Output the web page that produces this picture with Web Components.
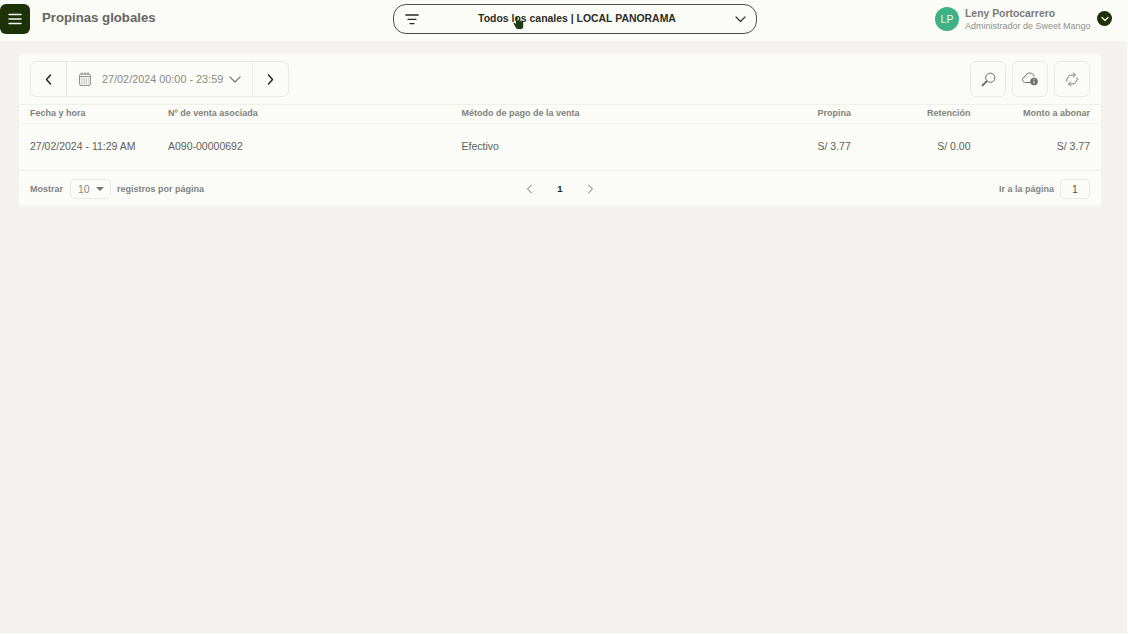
<!DOCTYPE html>
<html lang="es">
<head>
<meta charset="utf-8">
<title>Propinas globales</title>
<style>
  html, body { margin: 0; height: 100%; background: #fbfcf7; }
  body { font-family: "Liberation Sans", Arial, sans-serif; overflow: hidden; }
</style>
</head>
<body>
<app-shell>
  <top-bar slot="top"></top-bar>
  <tips-card></tips-card>
</app-shell>

<script>
class AppShell extends HTMLElement {
  constructor() {
    super();
    this.attachShadow({ mode: "open" });
    this.shadowRoot.innerHTML = `
      <style>
        :host { display: flex; flex-direction: column; width: 1127px; height: 633px; background: #f3f2ee; }
        main { flex: 1; padding: 13px 26px 0 19px; }
      </style>
      <slot name="top"></slot>
      <main><slot></slot></main>
    `;
  }
}

class TopBar extends HTMLElement {
  constructor() {
    super();
    this.attachShadow({ mode: "open" });
    this.shadowRoot.innerHTML = `
      <style>
        :host { display: grid; grid-template-columns: 393px 364px 1fr; height: 41px; background: #fbfcf7; box-sizing: border-box; }
        .left { display: flex; align-items: center; gap: 12px; }
        .menu { width: 30px; height: 30px; border-radius: 6px; background: #1d3208; display: flex; align-items: center; justify-content: center; margin-top: -4px; }
        h1 { margin: -5px 0 0; font-size: 13.2px; line-height: 16px; font-weight: 700; color: #666663; }
        .channel { position: relative; box-sizing: border-box; height: 30px; margin-top: 4px; border: 1px solid #4d4f49; border-radius: 13px; display: flex; align-items: center; padding: 0 10px 0 11px; background: #fbfcf7; }
        .channel span { flex: 1; text-align: center; font-size: 10.45px; font-weight: 700; color: #2a2d25; padding-bottom: 2px; }
        .cursor { position: absolute; left: 119px; top: 11px; }
        .user { display: flex; align-items: flex-start; padding-left: 178px; }
        .avatar { width: 24px; height: 24px; margin-top: 7px; border-radius: 50%; background: #3eb285; color: #eefaf3; font-size: 10.5px; display: flex; align-items: center; justify-content: center; }
        .who { margin-left: 6px; padding-top: 8px; width: 126px; }
        .name { font-size: 10.4px; line-height: 12px; font-weight: 700; color: #7b7b77; }
        .role { font-size: 9px; line-height: 12px; color: #90908c; white-space: nowrap; }
        .drop { width: 15px; height: 15px; margin: 11px 0 0 6px; border-radius: 50%; background: #1d3208; display: flex; align-items: center; justify-content: center; }
      </style>
      <div class="left">
        <div class="menu">
          <svg width="14" height="12" viewBox="0 0 14 12" fill="none" stroke="#f4f5ee" stroke-width="1.5" stroke-linecap="round"><path d="M1 1.500h12M1 6h12M1 10.500h12"/></svg>
        </div>
        <h1>Propinas globales</h1>
      </div>
      <div class="channel">
        <svg width="14" height="11" viewBox="0 0 14 11" fill="none" stroke="#26281f" stroke-width="1.3" stroke-linecap="round"><path d="M.8 1h12.400M3 5.300h8M5 9.600h4"/></svg>
        <span>Todos los canales | LOCAL PANORAMA</span>
        <svg width="11" height="7" viewBox="0 0 11 7" fill="none" stroke="#33362e" stroke-width="1.2" stroke-linecap="round" stroke-linejoin="round"><path d="M1 1l4.500 4.500L10 1"/></svg>
        <svg class="cursor" width="11" height="15" viewBox="0 0 11 15" fill="#1f3a16"><path d="M3 1.200c0-1 1.600-1 1.600 0v4.300l.6-.2V4.400c0-.8 1.300-.8 1.400 0v1l.6-.1c.2-.7 1.300-.6 1.400.2l.6.1c.8 0 1 .6 1 1.400v3.500c0 1.300-.8 2.500-2 2.500H5c-1 0-1.600-.6-2.200-1.600L.6 7.800c-.4-.8.5-1.500 1.200-.9L3 8z"/></svg>
      </div>
      <div class="user">
        <div class="avatar">LP</div>
        <div class="who">
          <div class="name">Leny Portocarrero</div>
          <div class="role">Administrador de Sweet Mango</div>
        </div>
        <div class="drop">
          <svg width="8" height="6" viewBox="0 0 8 6" fill="none" stroke="#eef2e4" stroke-width="1.4" stroke-linecap="round" stroke-linejoin="round"><path d="M1 1.500l3 3 3-3"/></svg>
        </div>
      </div>
    `;
  }
}

class IconButton extends HTMLElement {
  constructor() {
    super();
    this.attachShadow({ mode: "open" });
    this.shadowRoot.innerHTML = `
      <style>
        :host { display: flex; width: 36px; height: 36px; box-sizing: border-box; border: 1px solid #ebebe6; border-radius: 6px; align-items: center; justify-content: center; }
      </style>
      <slot></slot>
    `;
  }
}

class DateNav extends HTMLElement {
  constructor() {
    super();
    this.attachShadow({ mode: "open" });
    this.shadowRoot.innerHTML = `
      <style>
        :host { display: flex; height: 36px; box-sizing: border-box; border: 1px solid #ebebe6; border-radius: 6px; align-items: stretch; }
        .arrow { width: 35px; display: flex; align-items: center; justify-content: center; }
        .range { width: 187px; box-sizing: border-box; border-left: 1px solid #ebebe6; border-right: 1px solid #ebebe6; display: flex; align-items: center; padding-left: 12px; color: #8a8a84; font-size: 10.85px; }
        .range span { margin: 0 6px 0 11px; white-space: nowrap; }
      </style>
      <div class="arrow"><svg width="7" height="11" viewBox="0 0 7 11" fill="none" stroke="#23261f" stroke-width="1.5" stroke-linecap="round" stroke-linejoin="round"><path d="M5.500 1L1.500 5.500l4 4.500"/></svg></div>
      <div class="range">
        <svg width="12" height="14" viewBox="0 0 12 14" fill="none" stroke="#7d7d78" stroke-width=".9"><rect x=".6" y="2" width="10.800" height="11.400" rx="1.400"/><path d="M3 .4v2.400M6 .4v2.400M9 .4v2.400M.6 4.600h10.800"/><path stroke-dasharray="1 1.100" d="M2.600 7h7M2.600 9h7M2.600 11h7"/></svg>
        <span>27/02/2024 00:00 - 23:59</span>
        <svg width="12" height="7" viewBox="0 0 12 7" fill="none" stroke="#6f6f6a" stroke-width="1.1" stroke-linecap="round" stroke-linejoin="round"><path d="M.8.8L6 6l5.200-5.200"/></svg>
      </div>
      <div class="arrow"><svg width="7" height="11" viewBox="0 0 7 11" fill="none" stroke="#23261f" stroke-width="1.5" stroke-linecap="round" stroke-linejoin="round"><path d="M1.500 1l4 4.500-4 4.500"/></svg></div>
    `;
  }
}

class TipsCard extends HTMLElement {
  constructor() {
    super();
    this.attachShadow({ mode: "open" });
    this.shadowRoot.innerHTML = `
      <style>
        :host { display: block; width: 1082px; height: 152px; background: #fbfcf7; border-radius: 4px; color: #5d5d59; }
        .tools { display: flex; justify-content: space-between; align-items: center; height: 51px; box-sizing: border-box; padding: 0 11px; border-bottom: 1px solid #f0f0eb; }
        .actions { display: flex; gap: 6px; }
        .grid { display: grid; grid-template-columns: 138px 293.500px 356px 34px 119px 1fr; padding: 0 11px; align-items: center; white-space: nowrap; box-sizing: border-box; }
        .head { height: 19px; border-bottom: 1px solid #f3f3ee; font-size: 9px; font-weight: 700; color: #82827e; padding-bottom: 2px; }
        .row { height: 47px; border-bottom: 1px solid #f0f0eb; font-size: 10.5px; color: #60605c; padding-bottom: 2px; }
        .r { text-align: right; }
        .foot { display: grid; grid-template-columns: 1fr 1fr 1fr; align-items: center; height: 35px; padding: 0 11px; font-size: 9px; font-weight: 700; color: #82827e; }
        .show { display: flex; align-items: center; gap: 6px; }
        .select { width: 41px; height: 20px; margin-left: 1px; box-sizing: border-box; border: 1px solid #ebebe6; border-radius: 4px; display: flex; align-items: center; padding-left: 7px; gap: 6px; font-size: 10.5px; font-weight: 400; color: #8a8a85; }
        .caret { width: 0; height: 0; border: 4px solid transparent; border-top: 4px solid #77776f; border-bottom: 0; }
        .pager { display: flex; justify-content: center; align-items: center; gap: 24px; color: #23261f; font-size: 9.5px; }
        .goto { display: flex; justify-content: flex-end; align-items: center; gap: 6px; }
        .page { width: 30px; height: 20px; box-sizing: border-box; border: 1px solid #ebebe6; border-radius: 4px; display: flex; align-items: center; justify-content: center; font-size: 10.5px; font-weight: 400; color: #55554f; }
      </style>
      <div class="tools">
        <date-nav></date-nav>
        <div class="actions">
          <icon-button>
            <svg width="15" height="15" viewBox="0 0 15 15" fill="none" stroke="#6d6d68" stroke-width="1"><circle cx="9.300" cy="5.700" r="4.600"/><path stroke-width="2" stroke-linecap="round" d="M5.600 9.400L1.600 13.400"/></svg>
          </icon-button>
          <icon-button>
            <svg width="16" height="14" viewBox="0 0 16 14" fill="none" stroke="#6d6d68" stroke-width="1"><path d="M8.500 10.500H3.600C1.900 10.500.6 9.200.6 7.600c0-1.500 1.100-2.700 2.600-2.900C3.800 2.400 5.600 1 7.700 1c2.300 0 4.200 1.600 4.500 3.700"/><circle cx="12" cy="9.500" r="3.800" fill="#6d6d68" stroke="none"/><path stroke="#fbfcf7" d="M12 8.700v3M12 7v.8"/></svg>
          </icon-button>
          <icon-button>
            <svg width="14" height="15" viewBox="0 0 14 15" fill="none" stroke="#7d7d78" stroke-width="1" stroke-linecap="round" stroke-linejoin="round"><path d="M1.700 9.200A5.500 5.500 0 0 1 7 3h3"/><path d="M8.300.8L10.500 3 8.300 5.200"/><path d="M12.300 5.800A5.500 5.500 0 0 1 7 12H4"/><path d="M5.700 9.800L3.500 12l2.200 2.200"/></svg>
          </icon-button>
        </div>
      </div>
      <div class="grid head">
        <div>Fecha y hora</div><div>Nº de venta asociada</div><div>Método de pago de la venta</div>
        <div>Propina</div><div class="r">Retención</div><div class="r">Monto a abonar</div>
      </div>
      <div class="grid row">
        <div>27/02/2024 - 11:29 AM</div><div>A090-00000692</div><div>Efectivo</div>
        <div>S/ 3.77</div><div class="r">S/ 0.00</div><div class="r">S/ 3.77</div>
      </div>
      <div class="foot">
        <div class="show">Mostrar <div class="select">10 <i class="caret"></i></div> registros por página</div>
        <div class="pager">
          <svg width="7" height="10" viewBox="0 0 7 10" fill="none" stroke="#6d6d68" stroke-width="1" stroke-linecap="round" stroke-linejoin="round"><path d="M5.500 1L1.500 5l4 4"/></svg>
          <b>1</b>
          <svg width="7" height="10" viewBox="0 0 7 10" fill="none" stroke="#6d6d68" stroke-width="1" stroke-linecap="round" stroke-linejoin="round"><path d="M1.500 1l4 4-4 4"/></svg>
        </div>
        <div class="goto">Ir a la página <div class="page">1</div></div>
      </div>
    `;
  }
}

customElements.define("app-shell", AppShell);
customElements.define("top-bar", TopBar);
customElements.define("icon-button", IconButton);
customElements.define("date-nav", DateNav);
customElements.define("tips-card", TipsCard);
</script>
</body>
</html>
